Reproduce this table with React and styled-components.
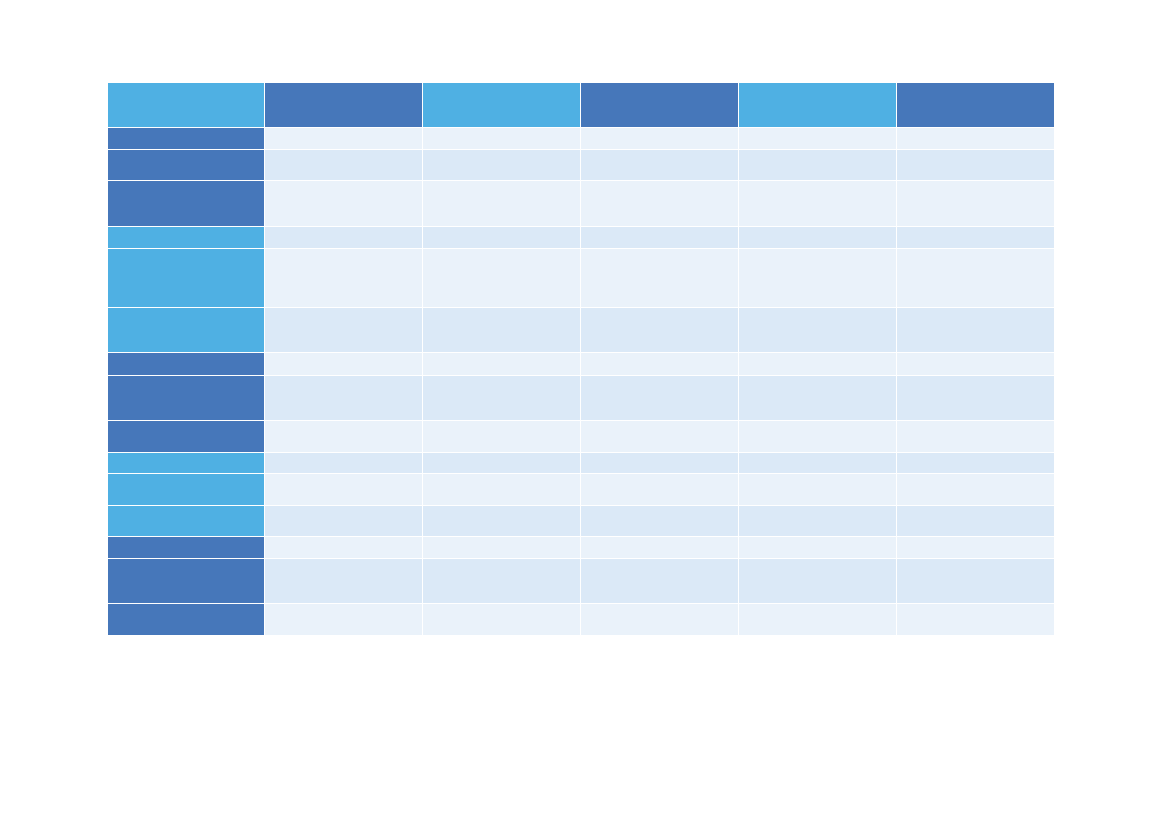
import { Fragment } from 'react';
import styled, { createGlobalStyle } from 'styled-components';

const GlobalStyle = createGlobalStyle`
  html, body {
    margin: 0;
    padding: 0;
    background: #ffffff;
    font-family: "Liberation Sans", Arial, sans-serif;
  }
`;

const rowHeights = [21, 30, 45, 21, 58, 44, 22, 44, 31, 20, 31, 30, 21, 44, 31];
const labelTones = ['dark', 'dark', 'dark', 'light', 'light', 'light', 'dark', 'dark', 'dark', 'light', 'light', 'light', 'dark', 'dark', 'dark'];
const headerTones = ['light', 'dark', 'light', 'dark', 'light', 'dark'];

const Page = styled.div`
  width: 1169px;
  min-height: 826px;
  padding: 83px 0 0 108px;
  box-sizing: border-box;
`;

const Grid = styled.div`
  display: grid;
  width: 946px;
  grid-template-columns: 156px repeat(5, 157px);
  grid-template-rows: 44px ${rowHeights.map((h) => `${h}px`).join(' ')};
  gap: 1px;
  background: #ffffff;
`;

const HeadCell = styled.div`
  background: ${(p) => (p.$tone === 'dark' ? '#4677ba' : '#4fb0e3')};
`;

const LabelCell = styled.div`
  background: ${(p) => (p.$tone === 'dark' ? '#4677ba' : '#4fb0e3')};
`;

const DataCell = styled.div`
  background: ${(p) => (p.$alt ? '#dbe9f7' : '#eaf2fa')};
`;

export default function App() {
  return (
    <>
      <GlobalStyle />
      <Page>
        <Grid>
          {headerTones.map((tone, i) => (
            <HeadCell key={`h${i}`} $tone={tone} />
          ))}
          {rowHeights.map((_, r) => (
            <Fragment key={`r${r}`}>
              <LabelCell $tone={labelTones[r]} />
              {[0, 1, 2, 3, 4].map((c) => (
                <DataCell key={c} $alt={r % 2 === 1} />
              ))}
            </Fragment>
          ))}
        </Grid>
      </Page>
    </>
  );
}
